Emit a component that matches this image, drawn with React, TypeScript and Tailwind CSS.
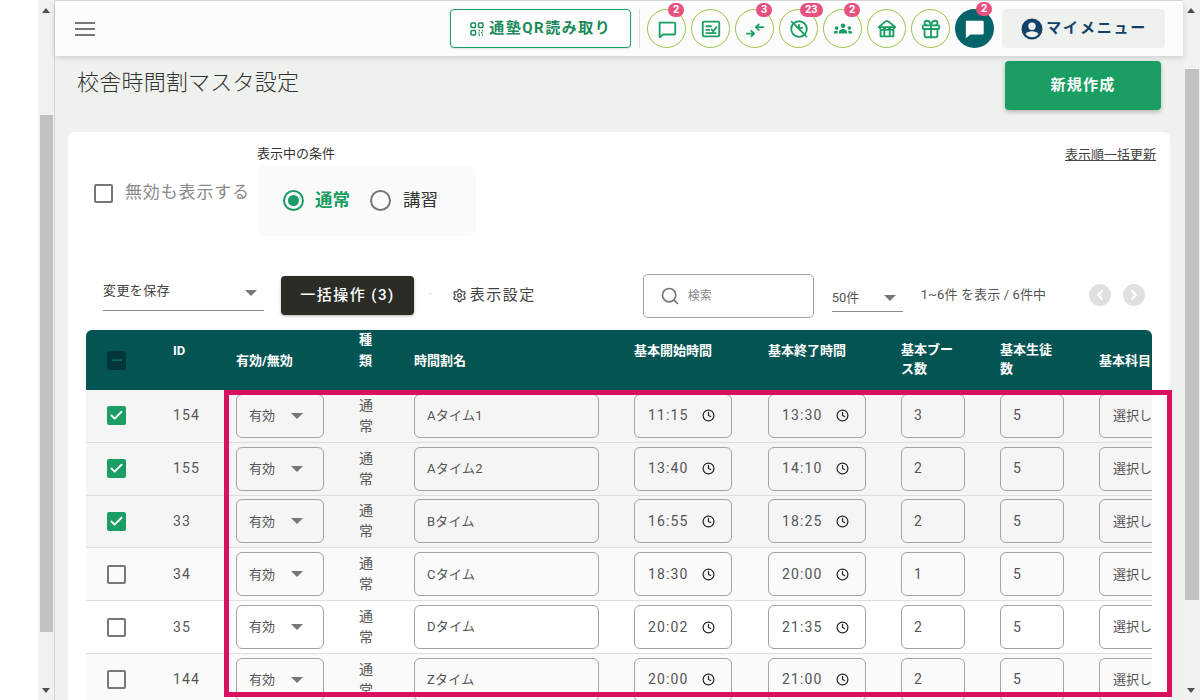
import { Gift, Search, Settings, ChevronLeft, ChevronRight, Check, Minus, Clock } from 'lucide-react';
import type { ReactNode } from 'react';

interface RowData {
  id: number;
  name: string;
  start: string;
  end: string;
  booth: number;
  checked: boolean;
  bg: string;
}

const rows: RowData[] = [
  { id: 154, name: 'Aタイム1', start: '11:15', end: '13:30', booth: 3, checked: true, bg: 'bg-[#f5f5f5]' },
  { id: 155, name: 'Aタイム2', start: '13:40', end: '14:10', booth: 2, checked: true, bg: 'bg-[#f5f5f5]' },
  { id: 33, name: 'Bタイム', start: '16:55', end: '18:25', booth: 2, checked: true, bg: 'bg-[#f5f5f5]' },
  { id: 34, name: 'Cタイム', start: '18:30', end: '20:00', booth: 1, checked: false, bg: 'bg-[#fafafa]' },
  { id: 35, name: 'Dタイム', start: '20:02', end: '21:35', booth: 2, checked: false, bg: 'bg-white' },
  { id: 144, name: 'Zタイム', start: '20:00', end: '21:00', booth: 2, checked: false, bg: 'bg-[#fafafa]' },
];

const gridCols = 'grid grid-cols-[87px_63px_123px_55px_220px_134px_133px_99px_99px_1fr]';
const fieldClass = 'h-[44px] flex items-center rounded-[6px] border border-[#a3a3a3] text-[13px] text-[#555]';

function Arrow() {
  return <span className="block w-0 h-0 border-x-[6px] border-x-transparent border-t-[6px] border-t-[#777]" />;
}

function Scrollbar({ thumb, width }: { thumb: string; width: string }) {
  return (
    <div className={`relative shrink-0 h-full bg-[#f1f1f1] ${width}`}>
      <span className="absolute top-[8px] left-[4px] w-0 h-0 border-x-[4px] border-x-transparent border-b-[5px] border-b-[#505050]" />
      <div className={`absolute left-[2px] right-[1px] bg-[#c1c1c1] ${thumb}`} />
      <span className="absolute bottom-[7px] left-[4px] w-0 h-0 border-x-[4px] border-x-transparent border-t-[5px] border-t-[#505050]" />
    </div>
  );
}

function RoundIcon({ badge, children, dark = false }: { badge?: string; children: ReactNode; dark?: boolean }) {
  return (
    <div
      className={`relative w-[39px] h-[39px] rounded-full flex items-center justify-center ${dark ? 'bg-[#04646a] text-white' : 'border border-[#9cc24a] text-[#1a9e63]'}`}
    >
      {children}
      {badge && (
        <span className="absolute -top-[7px] left-1/2 ml-[1px] min-w-[16px] px-[5px] h-[14px] rounded-full bg-[#e8517d] text-white text-[11px] leading-[14px] font-bold text-center">
          {badge}
        </span>
      )}
    </div>
  );
}

function Svg({ children }: { children: ReactNode }) {
  return (
    <svg width="22" height="22" viewBox="0 0 24 24" fill="none" stroke="currentColor" strokeWidth="2" strokeLinecap="round" strokeLinejoin="round">
      {children}
    </svg>
  );
}

function HeaderIcons() {
  return (
    <div className="flex items-center gap-[5px]">
      <RoundIcon badge="2">
        <Svg>
          <path d="M4 5h16a1 1 0 0 1 1 1v11a1 1 0 0 1-1 1H8l-4 3z" />
        </Svg>
      </RoundIcon>
      <RoundIcon>
        <Svg>
          <rect x="3" y="4" width="18" height="16" rx="1.500" />
          <path d="M7 9h5M7 13h3M7 16.500h10M12.500 12.500l2 2 3.500-4.500" />
        </Svg>
      </RoundIcon>
      <RoundIcon badge="3">
        <Svg>
          <path d="M3 17h8M8 14l3 3-3 3M21 10h-8M16 7l-3 3 3 3" />
        </Svg>
      </RoundIcon>
      <RoundIcon badge="23">
        <Svg>
          <circle cx="12" cy="12" r="8.500" />
          <path d="M4 4l16 16M12 7.500V12l3.500-1.500" />
        </Svg>
      </RoundIcon>
      <RoundIcon badge="2">
        <svg width="22" height="22" viewBox="0 0 24 24" fill="currentColor">
          <circle cx="12" cy="8.500" r="2.500" />
          <circle cx="5" cy="11" r="2" />
          <circle cx="19" cy="11" r="2" />
          <path d="M7.500 17v-1.500c0-2 2-3.500 4.500-3.500s4.500 1.500 4.500 3.500V17zM2 17v-1c0-1.200 1-2 3-2 .5 0 1 0 1.400.2-.3.5-.4 1-.4 1.500V17zM22 17v-1c0-1.200-1-2-3-2-.5 0-1 0-1.400.2.3.5.4 1 .4 1.500V17z" />
        </svg>
      </RoundIcon>
      <RoundIcon>
        <Svg>
          <path d="M3 10c2-1 6-6 9-7 3 1 7 6 9 7zM4 10c0 1.500 1.500 3 3 3s2-1.500 2.500-3M9.500 10c0 1.500 1 3 2.500 3s2.500-1.500 2.500-3M14.500 10c.5 1.500 1 3 2.500 3s3-1.500 3-3M5 13v7h14v-7M9 20v-7M15 20v-7" />
        </Svg>
      </RoundIcon>
      <RoundIcon>
        <Gift size={22} strokeWidth={2} />
      </RoundIcon>
      <RoundIcon badge="2" dark>
        <svg width="22" height="22" viewBox="0 0 24 24" fill="currentColor">
          <path d="M4 3h16a1.500 1.500 0 0 1 1.500 1.500v12A1.500 1.500 0 0 1 20 18H7l-5 4V4.500A1.500 1.500 0 0 1 4 3z" />
        </svg>
      </RoundIcon>
    </div>
  );
}

function Header() {
  return (
    <header className="relative z-10 h-[55px] shrink-0 flex items-center bg-[#fcfcfc] shadow-[0_2px_6px_rgba(0,0,0,0.14)] pl-[20px] pr-[18px]">
      <div className="flex flex-col gap-[4px] w-[20px]">
        <span className="h-[2px] bg-[#777]" />
        <span className="h-[2px] bg-[#777]" />
        <span className="h-[2px] bg-[#777]" />
      </div>
      <button className="ml-[355px] w-[182px] h-[39px] flex items-center justify-center gap-[5px] rounded-[4px] border border-[#1a9e63] bg-white text-[#1a8a5a] text-[15px] font-bold tracking-[0.1em] shadow-[0_1px_2px_rgba(0,0,0,0.12)]">
        <svg width="14" height="14" viewBox="0 0 14 14" fill="none" stroke="currentColor" strokeWidth="1.500">
          <rect x="1" y="1" width="4.500" height="4.500" rx="1" />
          <rect x="8.500" y="1" width="4.500" height="4.500" rx="1" />
          <rect x="1" y="8.500" width="4.500" height="4.500" rx="1" />
          <path d="M8.500 8.500h1.500M12 8.500h1M8.500 11h1M11 10.500h1.500M8.500 13h1.500M12 13h1" />
        </svg>
        通塾QR読み取り
      </button>
      <span className="w-px h-[39px] bg-[#ddd] ml-[8px] mr-[7px]" />
      <HeaderIcons />
      <div className="ml-[8px] w-[163px] h-[39px] flex items-center justify-center gap-[2px] rounded-[4px] bg-[#eef1ed] text-[#12426a] text-[15px] font-bold tracking-[0.12em]">
        <svg width="24" height="24" viewBox="0 0 24 24" fill="currentColor">
          <path d="M12 1.500a10.500 10.500 0 1 0 0 21 10.500 10.500 0 0 0 0-21zm0 4a3.700 3.700 0 1 1 0 7.400 3.700 3.700 0 0 1 0-7.400zm0 14.800a8.300 8.300 0 0 1-6.500-3.200c.8-1.800 4-2.800 6.500-2.800s5.700 1 6.500 2.800a8.300 8.300 0 0 1-6.500 3.200z" />
        </svg>
        マイメニュー
      </div>
    </header>
  );
}

function Toolbar() {
  return (
    <div className="flex items-start pl-[35px] mt-[10px] h-[56px]">
      <div className="w-[161px] h-[37px] flex items-center justify-between border-b border-[#8a8a8a] pb-[2px] text-[13px] tracking-[0.03em] text-[#444]">
        変更を保存
        <span className="mr-[7px] mt-[4px]">
          <Arrow />
        </span>
      </div>
      <button className="ml-[17px] mt-[2px] w-[133px] h-[39px] rounded-[4px] bg-[#2b2c26] text-white text-[15px] font-medium tracking-[0.1em] shadow-[0_1px_3px_rgba(0,0,0,0.3)]">
        一括操作 (3)
      </button>
      <span className="ml-[15px] mt-[13px] text-[#999] text-[10px]">·</span>
      <div className="ml-[20px] mt-[2px] w-[83px] h-[39px] flex items-center gap-[3px] text-[15px] text-[#444] tracking-[0.1em] whitespace-nowrap">
        <Settings size={15} className="shrink-0" />
        表示設定
      </div>
      <div className="ml-[108px] w-[171px] h-[44px] flex items-center gap-[8px] pl-[16px] rounded-[5px] border border-[#a3a3a3] text-[12px] text-[#888]">
        <Search size={20} className="text-[#777]" />
        検索
      </div>
      <div className="ml-[18px] mt-[4px] w-[71px] h-[34px] flex items-center justify-between border-b border-[#8a8a8a] pt-[6px] text-[13px] text-[#555]">
        50件
        <span className="mr-[7px]">
          <Arrow />
        </span>
      </div>
      <span className="ml-[18px] mt-[11px] w-[168px] text-[13px] leading-[20px] tracking-[0.01em] text-[#555]">1~6件 を表示 / 6件中</span>
      <div className="flex gap-[12px] mt-[10px]">
        <span className="w-[22px] h-[22px] rounded-full bg-[#e0e0e0] flex items-center justify-center text-white">
          <ChevronLeft size={16} strokeWidth={3} />
        </span>
        <span className="w-[22px] h-[22px] rounded-full bg-[#e0e0e0] flex items-center justify-center text-white">
          <ChevronRight size={16} strokeWidth={3} />
        </span>
      </div>
    </div>
  );
}

function TableHead() {
  return (
    <div className={`${gridCols} h-[60px] items-center rounded-t-[6px] bg-[#045454] text-white text-[13px] font-bold leading-[19px]`}>
      <span className="ml-[21px] w-[19px] h-[19px] rounded-[3px] bg-[#02363a] flex items-center justify-center text-[#0d6a62]">
        <Minus size={14} strokeWidth={3} />
      </span>
      <span className="-mt-[20px]">ID</span>
      <span>有効/無効</span>
      <span className="w-[14px] -mt-[20px] leading-[21px]">種類</span>
      <span>時間割名</span>
      <span className="-mt-[20px]">基本開始時間</span>
      <span className="-mt-[20px]">基本終了時間</span>
      <span className="w-[56px] -mt-[3px]">基本ブース数</span>
      <span className="w-[56px] -mt-[3px]">基本生徒数</span>
      <span className="whitespace-nowrap">基本科目</span>
    </div>
  );
}

function TimeField({ value }: { value: string }) {
  return (
    <div className={`${fieldClass} w-[98px] pl-[13px] gap-[14px] text-[14px] tracking-[0.08em]`}>
      {value}
      <Clock size={13} strokeWidth={2.2} className="text-[#222]" />
    </div>
  );
}

function TableRow({ row }: { row: RowData }) {
  return (
    <div className={`${gridCols} h-[52.8px] items-center border-b border-[#dedede] ${row.bg}`}>
      {row.checked ? (
        <span className="ml-[21px] w-[19px] h-[19px] rounded-[2px] bg-[#1a9e63] flex items-center justify-center text-white">
          <Check size={15} strokeWidth={3} />
        </span>
      ) : (
        <span className="ml-[21px] w-[19px] h-[19px] rounded-[2px] border-2 border-[#777]" />
      )}
      <span className="text-[14px] text-[#555] tracking-[0.08em]">{row.id}</span>
      <div className={`${fieldClass} w-[88px] pl-[12px] gap-[16px]`}>
        有効
        <Arrow />
      </div>
      <span className="w-[14px] text-[14px] leading-[21px] text-[#555]">通常</span>
      <div className={`${fieldClass} w-[185px] pl-[12px] tracking-[0.02em]`}>{row.name}</div>
      <TimeField value={row.start} />
      <TimeField value={row.end} />
      <div className={`${fieldClass} w-[64px] pl-[12px] text-[14px]`}>{row.booth}</div>
      <div className={`${fieldClass} w-[64px] pl-[12px] text-[14px]`}>5</div>
      <div className={`${fieldClass} w-[70px] pl-[13px] whitespace-nowrap`}>選択し</div>
    </div>
  );
}

export default function App() {
  return (
    <div className="relative w-[1200px] h-[700px] overflow-hidden flex bg-white font-['Roboto','Noto_Sans_CJK_JP',sans-serif]">
      <div className="w-[38px] shrink-0 bg-white" />
      <Scrollbar width="w-[16px]" thumb="top-[115px] h-[517px]" />
      <main className="relative w-[1129px] shrink-0 h-full flex flex-col border-l border-[#d4d4d4] border-t border-t-[#dcdcdc] bg-[#eef1ed]">
        <Header />
        <div className="flex justify-between pl-[22px] pr-[22px] pt-[5px]">
          <h1 className="mt-[5px] text-[22px] font-light leading-[34px] tracking-[0.01em] text-[#333]">校舎時間割マスタ設定</h1>
          <button className="w-[156px] h-[49px] rounded-[4px] bg-[#1a9e63] text-white text-[15px] font-bold tracking-[0.08em] shadow-[0_2px_4px_rgba(0,0,0,0.25)]">
            新規作成
          </button>
        </div>
        <section className="ml-[13px] mt-[22px] w-[1102px] flex-1 rounded-t-[6px] bg-white overflow-hidden">
          <div className="relative flex h-[132px] pl-[26px]">
            <label className="flex items-center gap-[12px] h-[30px] mt-[46px] text-[17px] tracking-[0.05em] text-[#8a8a8a] whitespace-nowrap">
              <span className="w-[19px] h-[19px] rounded-[2px] border-2 border-[#777]" />
              無効も表示する
            </label>
            <div className="ml-[7px] mt-[13px]">
              <p className="text-[13px] leading-[18px] text-[#333]">表示中の条件</p>
              <div className="mt-[2px] ml-px w-[218px] h-[71px] flex items-center pl-[25px] rounded-[8px] bg-[#fafafa]">
                <span className="w-[21px] h-[21px] rounded-full border-[2.500px] border-[#1a9e63] flex items-center justify-center">
                  <span className="w-[11px] h-[11px] rounded-full bg-[#1a9e63]" />
                </span>
                <span className="ml-[11px] text-[17.500px] font-bold text-[#1a9e63]">通常</span>
                <span className="ml-[20px] w-[21px] h-[21px] rounded-full border-2 border-[#777]" />
                <span className="ml-[12px] text-[17.500px] text-[#333]">講習</span>
              </div>
            </div>
            <span className="absolute right-[14px] top-[15px] text-[13px] leading-[16px] text-[#444] underline">表示順一括更新</span>
          </div>
          <Toolbar />
          <div className="ml-[18px] w-[1066px] overflow-hidden">
            <TableHead />
            {rows.map((row) => (
              <TableRow key={row.id} row={row} />
            ))}
          </div>
        </section>
      </main>
      <Scrollbar width="w-[17px]" thumb="top-[69px] h-[531px]" />
      <div className="absolute left-[224px] top-[390px] w-[948px] h-[307px] border-[5px] border-[#d9105f]" />
    </div>
  );
}
